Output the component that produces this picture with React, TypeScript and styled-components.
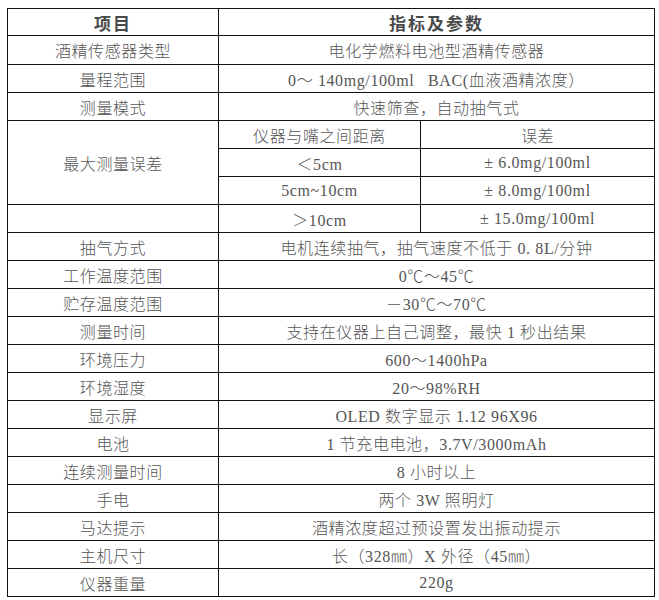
import React from "react";
import styled, { createGlobalStyle } from "styled-components";

const GlobalStyle = createGlobalStyle`
  body {
    margin: 0;
    background: #ffffff;
  }
`;

type Row = { name: string; value: string };

const topRows: Row[] = [
  { name: "酒精传感器类型", value: "电化学燃料电池型酒精传感器" },
  { name: "量程范围", value: "0～ 140mg/100ml   BAC(血液酒精浓度）" },
  { name: "测量模式", value: "快速筛查，自动抽气式" },
];

const errorRows = [
  { distance: "＜5cm", error: "± 6.0mg/100ml" },
  { distance: "5cm~10cm", error: "± 8.0mg/100ml" },
];

const bottomRows: Row[] = [
  { name: "抽气方式", value: "电机连续抽气，抽气速度不低于 0. 8L/分钟" },
  { name: "工作温度范围", value: "0℃～45℃" },
  { name: "贮存温度范围", value: "－30℃～70℃" },
  { name: "测量时间", value: "支持在仪器上自己调整，最快 1 秒出结果" },
  { name: "环境压力", value: "600～1400hPa" },
  { name: "环境湿度", value: "20～98%RH" },
  { name: "显示屏", value: "OLED 数字显示 1.12 96X96" },
  { name: "电池", value: "1 节充电电池，3.7V/3000mAh" },
  { name: "连续测量时间", value: "8 小时以上" },
  { name: "手电", value: "两个 3W 照明灯" },
  { name: "马达提示", value: "酒精浓度超过预设置发出振动提示" },
  { name: "主机尺寸", value: "长（328㎜）X 外径（45㎜）" },
  { name: "仪器重量", value: "220g" },
];

const App = () => {
  return (
    <>
      <GlobalStyle />
      <Page>
        <SpecTable>
          <Cell $head>项目</Cell>
          <Cell $head $span={2}>
            指标及参数
          </Cell>
          {topRows.map(({ name, value }) => (
            <React.Fragment key={name}>
              <Cell>{name}</Cell>
              <Cell $span={2}>{value}</Cell>
            </React.Fragment>
          ))}
          <Cell $rows={3}>最大测量误差</Cell>
          <Cell>仪器与嘴之间距离</Cell>
          <Cell>误差</Cell>
          {errorRows.map(({ distance, error }) => (
            <React.Fragment key={distance}>
              <Cell>{distance}</Cell>
              <Cell>{error}</Cell>
            </React.Fragment>
          ))}
          <Cell />
          <Cell>＞10cm</Cell>
          <Cell>± 15.0mg/100ml</Cell>
          {bottomRows.map(({ name, value }) => (
            <React.Fragment key={name}>
              <Cell>{name}</Cell>
              <Cell $span={2}>{value}</Cell>
            </React.Fragment>
          ))}
        </SpecTable>
      </Page>
    </>
  );
};

export default App;

const Page = styled.div`
  padding: 8px 0 0 7px;
`;

const SpecTable = styled.div`
  display: grid;
  grid-template-columns: 211px 202px 234px;
  grid-template-rows: 27px 29px;
  grid-auto-rows: 28px;
  width: max-content;
  border-top: 1px solid #111;
  border-left: 1px solid #111;
  font-family: "Liberation Serif", "Noto Sans CJK SC", serif;
  font-size: 16px;
  color: #555;
`;

const Cell = styled.div<{ $span?: number; $rows?: number; $head?: boolean }>`
  box-sizing: border-box;
  grid-column: span ${(p) => p.$span ?? 1};
  grid-row: span ${(p) => p.$rows ?? 1};
  display: flex;
  align-items: center;
  justify-content: center;
  border-right: 1px solid #111;
  border-bottom: 1px solid #111;
  white-space: pre;
  letter-spacing: ${(p) => (p.$head ? "2px" : "0.6px")};
  font-weight: ${(p) => (p.$head ? 700 : 300)};
  font-size: ${(p) => (p.$head ? "17px" : "16px")};
  color: ${(p) => (p.$head ? "#4a4a4a" : "#555")};
`;
